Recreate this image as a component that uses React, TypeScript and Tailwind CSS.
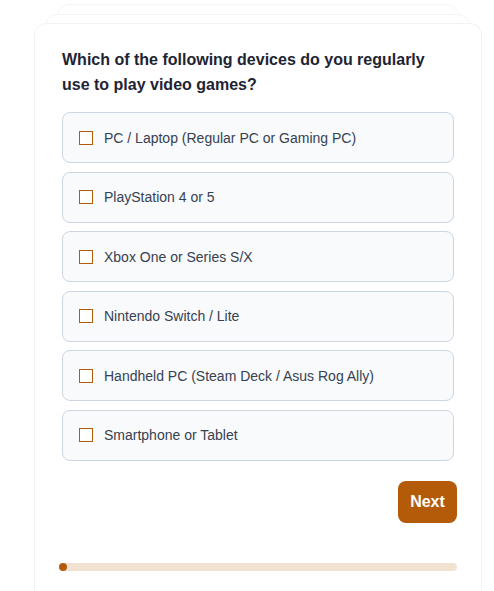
import React from "react";

const options = [
  "PC / Laptop (Regular PC or Gaming PC)",
  "PlayStation 4 or 5",
  "Xbox One or Series S/X",
  "Nintendo Switch / Lite",
  "Handheld PC (Steam Deck / Asus Rog Ally)",
  "Smartphone or Tablet",
];

export default function App() {
  return (
    <div
      className="relative h-[591px] w-[494px] overflow-hidden bg-white"
      style={{ fontFamily: '"Liberation Sans", Arial, sans-serif' }}
    >
      <div className="absolute left-[57px] top-[4px] h-[700px] w-[402px] rounded-xl border border-[#f3f4f6] bg-white" />
      <div className="absolute left-[45px] top-[14px] h-[700px] w-[425px] rounded-xl border border-[#f3f4f6] bg-white" />
      <div className="relative ml-[34px] mt-[23px] h-[620px] w-[448px] rounded-xl border border-[#f1f2f4] bg-white px-6 pt-[23px]">
        <div className="px-[3px]">
          <h2 className="mb-[15px] text-base font-bold leading-[25px] text-[#1e2433]">
            Which of the following devices do you regularly use to play video games?
          </h2>
          <div className="flex flex-col gap-[8.6px]">
            {options.map((o) => (
              <label
                key={o}
                className="flex h-[51px] items-center gap-[11px] rounded-lg border border-[#cdd6e2] bg-[#f8fafc] px-4 text-sm text-[#374151]"
              >
                <span className="h-[14px] w-[14px] shrink-0 border border-[#b45b0a] bg-white" />
                <span>{o}</span>
              </label>
            ))}
          </div>
        </div>
        <div className="mt-5 flex justify-end">
          <button className="h-[42px] w-[59px] rounded-lg bg-[#b45b0a] text-base font-bold text-white">
            Next
          </button>
        </div>
        <div className="mt-10 h-2 w-full rounded-full bg-[#f1e2d1]">
          <div className="h-2 w-2 rounded-full bg-[#b45b0a]" />
        </div>
      </div>
    </div>
  );
}
